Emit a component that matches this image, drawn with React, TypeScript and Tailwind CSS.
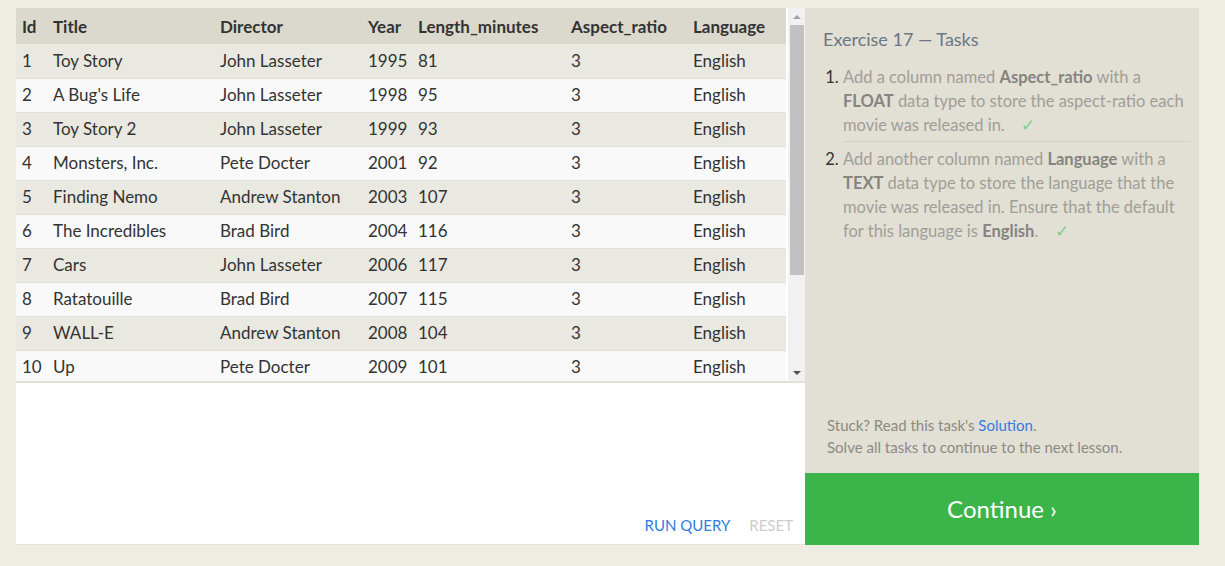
import React from "react";

const movies = [
    [1, "Toy Story", "John Lasseter", 1995, 81],
    [2, "A Bug's Life", "John Lasseter", 1998, 95],
    [3, "Toy Story 2", "John Lasseter", 1999, 93],
    [4, "Monsters, Inc.", "Pete Docter", 2001, 92],
    [5, "Finding Nemo", "Andrew Stanton", 2003, 107],
    [6, "The Incredibles", "Brad Bird", 2004, 116],
    [7, "Cars", "John Lasseter", 2006, 117],
    [8, "Ratatouille", "Brad Bird", 2007, 115],
    [9, "WALL-E", "Andrew Stanton", 2008, 104],
    [10, "Up", "Pete Docter", 2009, 101],
];

const cols = [
    { name: "Id", w: "w-[31px]" },
    { name: "Title", w: "w-[167px]" },
    { name: "Director", w: "w-[148px]" },
    { name: "Year", w: "w-[50px]" },
    { name: "Length_minutes", w: "w-[153px]" },
    { name: "Aspect_ratio", w: "w-[122px]" },
    { name: "Language", w: "w-[99px]" },
];

const Check = () => <span className="ml-3 text-[#7fcf8a]">✓</span>;

const App: React.FC = () => {
    return (
        <div className="min-h-screen bg-[#efece4] pt-2 pl-4 font-['Lato','Noto_Sans',sans-serif]">
            <div className="flex">
                {/* query results + editor */}
                <div className="w-[789px] h-[537px] bg-white border-b border-[#e4e2da] flex flex-col">
                    <div className="flex h-[375px] border-b-2 border-[#e2e0d8]">
                        <div className="flex-1 overflow-hidden">
                            <table className="table-fixed border-collapse text-[17px] text-[#333]">
                                <thead>
                                    <tr className="h-[36px] bg-[#dbd9cd]">
                                        {cols.map((c) => (
                                            <th key={c.name} className={`${c.w} pl-[6px] pt-px text-left font-bold`}>
                                                {c.name}
                                            </th>
                                        ))}
                                    </tr>
                                </thead>
                                <tbody>
                                    {movies.map((m, i) => (
                                        <tr
                                            key={m[0]}
                                            className={`h-[34px] border-b border-[#e1dfd7] ${
                                                i % 2 === 0 ? "bg-[#eae9e1]" : "bg-[#f9f9f9]"
                                            }`}
                                        >
                                            {[...m, 3, "English"].map((v, j) => (
                                                <td key={j} className="pl-[6px] pb-px">
                                                    {v}
                                                </td>
                                            ))}
                                        </tr>
                                    ))}
                                </tbody>
                            </table>
                        </div>
                        {/* scrollbar */}
                        <div className="w-[17px] bg-[#f1f1f1] flex flex-col items-center">
                            <div className="h-[17px] flex items-center justify-center">
                                <div className="w-0 h-0 border-l-[4px] border-r-[4px] border-b-[4px] border-l-transparent border-r-transparent border-b-[#a3a3a3]" />
                            </div>
                            <div className="w-[14px] h-[250px] bg-[#c1c1c1]" />
                            <div className="flex-1" />
                            <div className="h-[17px] flex items-center justify-center">
                                <div className="w-0 h-0 border-l-[4px] border-r-[4px] border-t-[4px] border-l-transparent border-r-transparent border-t-[#505050]" />
                            </div>
                        </div>
                    </div>
                    <div className="flex-1 flex items-end justify-end gap-[19px] pr-[12px] pb-[8px] text-[15px]">
                        <span className="text-[#2f7de1]">RUN QUERY</span>
                        <span className="text-[#cccccc]">RESET</span>
                    </div>
                </div>

                {/* tasks */}
                <div className="w-[394px] h-[537px] bg-[#e2dfd4] flex flex-col">
                    <div className="flex-1 pl-[18px] pr-[8px] pt-[19px]">
                        <h2 className="text-[18px] text-[#6b7785] leading-6">Exercise 17 — Tasks</h2>
                        <ol className="mt-[14px] pl-[20px] list-decimal text-[16.5px] leading-6 text-[#a09e98] marker:text-[#333]">
                            <li className="pb-[4px] border-b border-[#d4d1c6]">
                                Add a column named <b className="text-[#858480]">Aspect_ratio</b> with a{" "}
                                <b className="text-[#858480]">FLOAT</b> data type to store the aspect-ratio each movie was
                                released in. <Check />
                            </li>
                            <li className="pt-[5px]">
                                Add another column named <b className="text-[#858480]">Language</b> with a{" "}
                                <b className="text-[#858480]">TEXT</b> data type to store the language that the movie was
                                released in. Ensure that the default for this language is{" "}
                                <b className="text-[#858480]">English</b>. <Check />
                            </li>
                        </ol>
                    </div>
                    <div className="pl-[22px] pb-[15px] text-[15px] leading-[22px] text-[#8c8a84]">
                        <div>
                            Stuck? Read this task's <span className="text-[#2f7de1]">Solution</span>.
                        </div>
                        <div>Solve all tasks to continue to the next lesson.</div>
                    </div>
                    <div className="h-[72px] bg-[#3bb54a] flex items-center justify-center text-white text-[24px]">
                        Continue ›
                    </div>
                </div>
            </div>
        </div>
    );
};

export default App;
